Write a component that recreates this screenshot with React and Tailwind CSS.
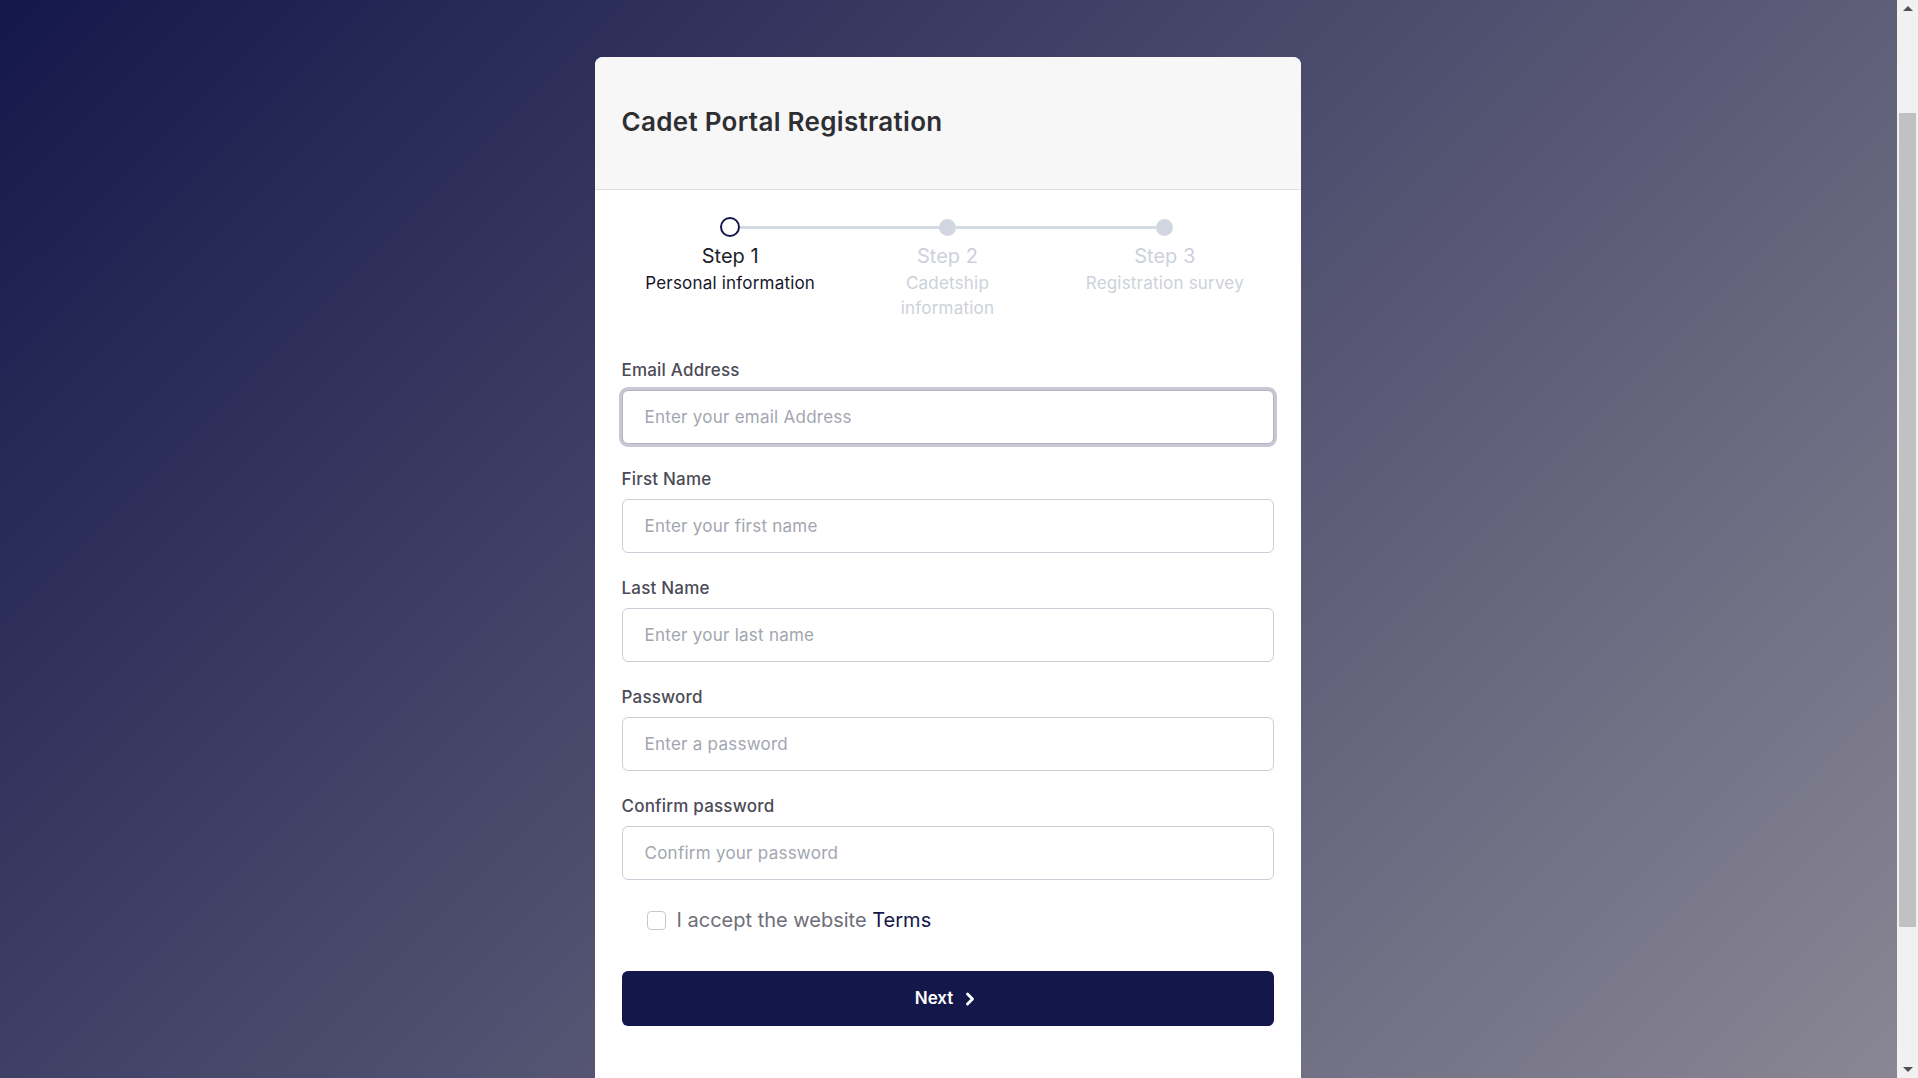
import React from 'react';
import { ChevronRight } from 'lucide-react';

const steps = [
  { title: 'Step 1', desc: 'Personal information', active: true },
  { title: 'Step 2', desc: 'Cadetship information' },
  { title: 'Step 3', desc: 'Registration survey' },
];

const fields = [
  { label: 'Email Address', placeholder: 'Enter your email Address', type: 'email', focused: true },
  { label: 'First Name', placeholder: 'Enter your first name', type: 'text' },
  { label: 'Last Name', placeholder: 'Enter your last name', type: 'text' },
  { label: 'Password', placeholder: 'Enter a password', type: 'password' },
  { label: 'Confirm password', placeholder: 'Confirm your password', type: 'password' },
];

function Stepper() {
  return (
    <div className="grid grid-cols-3 pt-[27px]">
      {steps.map((step, i) => (
        <div key={step.title} className="flex flex-col items-center text-center">
          {/* dot + connector halves */}
          <div className="flex items-center w-full h-5">
            <div className={`flex-1 h-[3px] ${i === 0 ? 'bg-transparent' : 'bg-[#d5d9e2]'}`} />
            {step.active ? (
              <div className="w-5 h-5 rounded-full border-[2.5px] border-[#14174a] bg-white flex-shrink-0" />
            ) : (
              <div className="w-[17px] h-[17px] rounded-full bg-[#d1d6e0] flex-shrink-0" />
            )}
            <div className={`flex-1 h-[3px] ${i === steps.length - 1 ? 'bg-transparent' : 'bg-[#d5d9e2]'}`} />
          </div>
          <div className={`mt-[4px] text-[20px] leading-[30px] ${step.active ? 'text-[#1d1d2c]' : 'text-[#cdd1da]'}`}>
            {step.title}
          </div>
          <div className={`text-[17px] leading-[25px] tracking-[0.2px] ${i === 1 ? 'w-[110px]' : ''} ${step.active ? 'text-[#15172c]' : 'text-[#cdd1da]'}`}>
            {step.desc}
          </div>
        </div>
      ))}
    </div>
  );
}

function Field({ label, placeholder, type, focused }) {
  return (
    <div className="flex flex-col pb-[23px]">
      <label className="text-[17px] leading-[24px] font-medium tracking-[0.2px] text-[#4b4b57] mb-[8px]">{label}</label>
      <input
        type={type}
        autoFocus={focused}
        placeholder={placeholder}
        className={`h-[54px] w-full rounded-[6px] border bg-white px-[22px] text-[17px] tracking-[0.25px] text-[#333] placeholder:text-[#a3a6b0] outline-none ${
          focused ? 'border-[#b4b3c3] ring-[3px] ring-[#c8c7d3]' : 'border-[#cbced8]'
        }`}
      />
    </div>
  );
}

function Scrollbar() {
  return (
    <div className="fixed top-0 right-0 h-screen w-[21px] bg-[#f1f1f1] flex flex-col items-center">
      <div className="h-[17px] w-full flex items-center justify-center">
        <div className="w-0 h-0 border-l-[5px] border-r-[5px] border-b-[5px] border-l-transparent border-r-transparent border-b-[#505050]" />
      </div>
      <div className="mt-[96px] h-[814px] w-[17px] bg-[#c1c1c1]" />
      <div className="flex-1" />
      <div className="h-[17px] w-full flex items-center justify-center">
        <div className="w-0 h-0 border-l-[5px] border-r-[5px] border-t-[5px] border-l-transparent border-r-transparent border-t-[#505050]" />
      </div>
    </div>
  );
}

export default function App() {
  return (
    <div
      className="min-h-screen bg-[linear-gradient(135deg,#14174a_0%,#8c8a96_100%)] pt-[57px] pb-[40px] pr-[23px]"
      style={{ fontFamily: 'Inter, "Noto Sans", sans-serif' }}
    >
      <div className="w-[706px] mx-auto bg-white rounded-[8px] overflow-hidden">
        {/* Header */}
        <div className="h-[133px] bg-[#f7f7f7] border-b border-[#e1e1e1] px-[27px] flex items-center">
          <h1 className="text-[26px] font-semibold text-[#2e2e33] tracking-[0.3px] mt-[-4px]">Cadet Portal Registration</h1>
        </div>

        <div className="px-[27px] pb-[70px]">
          <Stepper />

          <form className="mt-[37px]" onSubmit={e => e.preventDefault()}>
            {fields.map(f => (
              <Field key={f.label} {...f} />
            ))}

            {/* Terms */}
            <label className="flex items-center gap-[11px] ml-[25px] mt-[3px] text-[20px] leading-[28px] text-[#6e6e78]">
              <span className="w-[19px] h-[19px] rounded-[4px] border border-[#c6c9d4] bg-white flex-shrink-0" />
              <span>
                I accept the website <span className="text-[#14174a]">Terms</span>
              </span>
            </label>

            <button
              type="submit"
              className="mt-[37px] w-full h-[55px] rounded-[6px] bg-[#13174a] text-white text-[17px] font-semibold flex items-center justify-center gap-[7px]"
            >
              Next
              <ChevronRight className="w-[20px] h-[20px]" strokeWidth={3.5} />
            </button>
          </form>
        </div>
      </div>
      <Scrollbar />
    </div>
  );
}
